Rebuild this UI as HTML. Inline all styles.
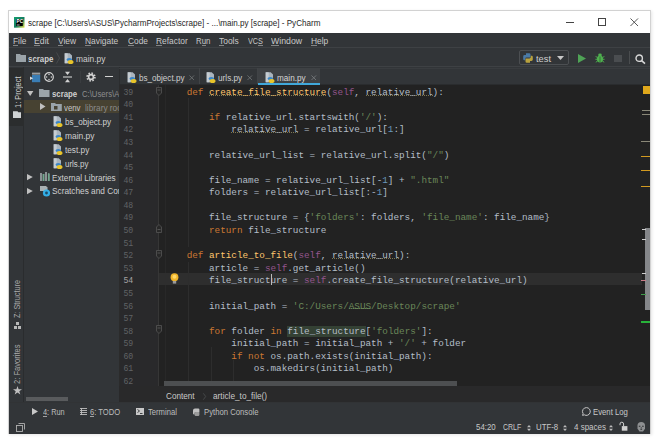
<!DOCTYPE html>
<html><head><meta charset="utf-8">
<style>
*{margin:0;padding:0;box-sizing:border-box}
html,body{width:660px;height:444px;overflow:hidden;background:#fff}
body{position:relative;font-family:"Liberation Sans",sans-serif}
.a{position:absolute;white-space:nowrap}
.t{position:absolute;white-space:nowrap;line-height:1;transform-origin:0 0}
svg.a{overflow:visible}
.code{white-space:pre;font-family:"Liberation Mono",monospace;font-size:9.32px;line-height:12.58px;color:#b4bec8;left:164.3px;top:86.7px}
.ln{white-space:pre;font-family:"Liberation Mono",monospace;font-size:9.32px;line-height:12.58px;color:#606366;left:113px;width:20.3px;text-align:right;top:86.7px;transform:scaleX(0.88);transform-origin:100% 0}
.k{color:#cc7832}.s{color:#94558d}.st{color:#6a8759}.n{color:#6897bb}.f{color:#ffc66d}
.w{background-image:linear-gradient(90deg,rgba(175,165,110,.65) 50%,transparent 50%);background-size:2px 1px;background-repeat:repeat-x;background-position:0 calc(100% - 2px)}
.wg{background-image:linear-gradient(90deg,rgba(110,150,95,.8) 60%,rgba(110,150,95,.4) 60%);background-size:2px 1px;background-repeat:repeat-x;background-position:0 calc(100% - 2.2px)}
.ig{position:absolute;width:1px;background:#2d2d2d}
.mu{border-bottom:0.7px solid rgba(200,200,200,.35)}
</style></head><body>
<!-- python icon def -->
<svg width="0" height="0" style="position:absolute">
 <defs>
  <g id="pyi">
   <path d="M0.7 0.3h5l2.3 2.3v7.7H0.7z" fill="#aab4bd"/>
   <path d="M0.7 0.3h3v10h-3z" fill="#c5ccd2"/>
   <ellipse cx="5.3" cy="6.6" rx="2.8" ry="1.5" fill="#3a86c8"/>
   <ellipse cx="6.6" cy="9" rx="2.9" ry="2" fill="#e8c42a"/>
  </g>
 </defs>
</svg>
<!-- window frame -->
<div class="a" style="left:8px;top:10px;width:643px;height:424px;background:#d2d2d2;box-shadow:1px 1px 3px rgba(0,0,0,.10)"></div>
<div class="a" style="left:9px;top:11px;width:641px;height:422.5px;background:#323538"></div>

<!-- title bar -->
<div class="a" style="left:9px;top:11px;width:641px;height:22px;background:#fff"></div>
<svg class="a" style="left:13.9px;top:16.5px" width="10.5" height="10.7" viewBox="0 0 10.5 10.7">
 <defs><linearGradient id="pcg" x1="0" y1="0" x2="1" y2="1"><stop offset="0" stop-color="#16a06e"/><stop offset=".55" stop-color="#127a5f"/><stop offset="1" stop-color="#e8e24a"/></linearGradient></defs>
 <rect x="0" y="0" width="10.5" height="10.7" fill="url(#pcg)"/>
 <rect x="2.2" y="2" width="6.6" height="7" fill="#000"/>
 <text x="2.6" y="6.3" font-family="Liberation Sans" font-weight="bold" font-size="4.6" fill="#fff">PC</text>
 <rect x="2.8" y="7.6" width="2.8" height="0.8" fill="#ddd"/>
</svg>
<div class="t" style="left:27.80px;top:19.00px;font-size:8.9px;color:#262626;transform:scaleX(0.9092);">scrape [C:\Users\ASUS\PycharmProjects\scrape] - ...\main.py [scrape] - PyCharm</div>
<div class="a" style="left:566px;top:21.6px;width:8px;height:0.9px;background:#444"></div>
<div class="a" style="left:597.5px;top:18px;width:8px;height:8px;border:0.9px solid #444"></div>
<svg class="a" style="left:629.8px;top:17.8px" width="8.5" height="8.5" viewBox="0 0 9 9"><path d="M0.5 0.5L8.5 8.5M8.5 0.5L0.5 8.5" stroke="#444" stroke-width="0.95"/></svg>

<!-- menu bar -->
<div class="a" style="left:9px;top:33px;width:641px;height:15px;background:#323538"></div>
<div class="t" style="left:12.80px;top:37.00px;font-size:9.3px;color:#c9c9c9;transform:scaleX(0.8944);">File</div>
<div class="t" style="left:34.20px;top:37.00px;font-size:9.3px;color:#c9c9c9;transform:scaleX(0.9361);">Edit</div>
<div class="t" style="left:57.70px;top:37.00px;font-size:9.3px;color:#c9c9c9;transform:scaleX(0.9094);">View</div>
<div class="t" style="left:85.10px;top:37.00px;font-size:9.3px;color:#c9c9c9;transform:scaleX(0.9045);">Navigate</div>
<div class="t" style="left:127.50px;top:37.00px;font-size:9.3px;color:#c9c9c9;transform:scaleX(0.8949);">Code</div>
<div class="t" style="left:156.30px;top:37.00px;font-size:9.3px;color:#c9c9c9;transform:scaleX(0.9020);">Refactor</div>
<div class="t" style="left:196.00px;top:37.00px;font-size:9.3px;color:#c9c9c9;transform:scaleX(0.8443);">Run</div>
<div class="t" style="left:219.00px;top:37.00px;font-size:9.3px;color:#c9c9c9;transform:scaleX(0.9076);">Tools</div>
<div class="t" style="left:247.90px;top:37.00px;font-size:9.3px;color:#c9c9c9;transform:scaleX(0.7793);">VCS</div>
<div class="t" style="left:270.90px;top:37.00px;font-size:9.3px;color:#c9c9c9;transform:scaleX(0.9396);">Window</div>
<div class="t" style="left:311.20px;top:37.00px;font-size:9.3px;color:#c9c9c9;transform:scaleX(0.9043);">Help</div>
<div class="a" style="left:12.80px;top:44.80px;width:5.08px;height:0.8px;background:rgba(200,200,200,.55)"></div>
<div class="a" style="left:34.20px;top:44.80px;width:5.81px;height:0.8px;background:rgba(200,200,200,.55)"></div>
<div class="a" style="left:57.70px;top:44.80px;width:5.64px;height:0.8px;background:rgba(200,200,200,.55)"></div>
<div class="a" style="left:85.10px;top:44.80px;width:6.07px;height:0.8px;background:rgba(200,200,200,.55)"></div>
<div class="a" style="left:127.50px;top:44.80px;width:6.01px;height:0.8px;background:rgba(200,200,200,.55)"></div>
<div class="a" style="left:156.30px;top:44.80px;width:6.06px;height:0.8px;background:rgba(200,200,200,.55)"></div>
<div class="a" style="left:201.67px;top:44.80px;width:4.37px;height:0.8px;background:rgba(200,200,200,.55)"></div>
<div class="a" style="left:219.00px;top:44.80px;width:5.16px;height:0.8px;background:rgba(200,200,200,.55)"></div>
<div class="a" style="left:257.97px;top:44.80px;width:4.83px;height:0.8px;background:rgba(200,200,200,.55)"></div>
<div class="a" style="left:270.90px;top:44.80px;width:8.25px;height:0.8px;background:rgba(200,200,200,.55)"></div>
<div class="a" style="left:311.20px;top:44.80px;width:6.07px;height:0.8px;background:rgba(200,200,200,.55)"></div>

<!-- nav bar -->
<div class="a" style="left:9px;top:48px;width:641px;height:18px;background:#323538"></div><div class="a" style="left:9px;top:47px;width:641px;height:1px;background:#3e4144"></div>
<svg class="a" style="left:15.5px;top:54px" width="10" height="8" viewBox="0 0 10 8"><path d="M0 0h4l1 1h5v7H0z" fill="#9aa3a9"/></svg>
<div class="t" style="left:28.20px;top:55.00px;font-size:9px;color:#d0d0d0;font-weight:bold;transform:scaleX(0.8751);">scrape</div>
<svg class="a" style="left:56px;top:51.5px" width="4" height="12" viewBox="0 0 4 12"><path d="M0.5 0.5L3.5 6L0.5 11.5" stroke="#4b4e50" stroke-width="0.8" fill="none"/></svg>
<svg class="a" style="left:63.5px;top:52.5px" width="11" height="11" viewBox="0 0 11 11"><use href="#pyi"/></svg>
<div class="t" style="left:75.80px;top:55.00px;font-size:9.2px;color:#d0d0d0;transform:scaleX(0.9128);">main.py</div>

<!-- run config -->
<div class="a" style="left:518.5px;top:50px;width:50px;height:14.5px;border:1px solid #4c4f52;border-radius:2px;background:#323538"></div>
<svg class="a" style="left:522.5px;top:52.5px" width="10" height="10" viewBox="0 0 10 10"><path d="M3 0.3h3.2a1.3 1.3 0 0 1 1.3 1.3V4.6H3.6A1.4 1.4 0 0 0 2.2 6V7.3H1.4A1.2 1.2 0 0 1 0.2 6.1V3.4A1.4 1.4 0 0 1 1.6 2H3z" fill="#4a7aa6"/><path d="M7 9.7H3.8a1.3 1.3 0 0 1-1.3-1.3V5.4H6.4A1.4 1.4 0 0 0 7.8 4V2.7h.8a1.2 1.2 0 0 1 1.2 1.2v2.7A1.4 1.4 0 0 1 8.4 8H7z" fill="#b9a23e"/></svg>
<div class="t" style="left:536.00px;top:55.00px;font-size:9.3px;color:#cfcfcf;transform:scaleX(1.0006);">test</div>
<svg class="a" style="left:556.5px;top:55.5px" width="7" height="4" viewBox="0 0 7 4"><path d="M0 0h7L3.5 4z" fill="#c8c8c8"/></svg>
<svg class="a" style="left:578px;top:54px" width="8" height="9" viewBox="0 0 8 9"><path d="M0 0L8 4.5L0 9z" fill="#4fa356"/></svg>
<svg class="a" style="left:595px;top:53px" width="10" height="10" viewBox="0 0 10 10"><ellipse cx="5" cy="6" rx="3.1" ry="3.6" fill="#4fb14f"/><ellipse cx="5" cy="2" rx="1.8" ry="1.4" fill="#4fb14f"/><path d="M0.6 3.5L2.2 4.3M9.4 3.5L7.8 4.3M0.4 6.3h1.8M9.6 6.3H7.8M0.8 9.2L2.4 8.2M9.2 9.2L7.6 8.2" stroke="#4fb14f" stroke-width="0.9"/><path d="M5 3.6v5.6" stroke="#2c5a2e" stroke-width="0.7"/></svg>
<div class="a" style="left:614.3px;top:55.3px;width:7.5px;height:7px;background:#4a4d50"></div>
<div class="a" style="left:629px;top:51px;width:1px;height:13px;background:#4a4d4f"></div>
<svg class="a" style="left:635px;top:53.5px" width="11" height="10" viewBox="0 0 11 10"><circle cx="4.2" cy="4.2" r="3.2" stroke="#d8d8d8" stroke-width="1.4" fill="none"/><path d="M6.6 6.6L10 9.6" stroke="#d8d8d8" stroke-width="1.6"/></svg>

<!-- left strip -->
<div class="a" style="left:9px;top:66px;width:15px;height:336px;background:#323538;border-right:1px solid #2a2c2e"></div>
<div class="a" style="left:9px;top:67.5px;width:14.5px;height:58.5px;background:#2b2d2e"></div>
<div class="a" style="left:20.5px;top:108px;transform-origin:0 0;transform:rotate(-90deg)"><div class="t" style="left:0.00px;top:-7.00px;font-size:8.8px;color:#cdcdcd;transform:scaleX(0.8474);">1: Project</div></div>
<svg class="a" style="left:12.8px;top:110.5px" width="8" height="7" viewBox="0 0 8 7"><path d="M0 0.2h4.5l0.8 1h2.7v5.8H0z" fill="#cfd2d4"/></svg>
<div class="a" style="left:20px;top:317.5px;transform-origin:0 0;transform:rotate(-90deg)"><div class="t" style="left:0.00px;top:-7.00px;font-size:8.5px;color:#aaaaaa;transform:scaleX(0.8558);">Z: Structure</div></div>
<svg class="a" style="left:13.5px;top:322px" width="7" height="7" viewBox="0 0 7 7"><rect x="2" y="0" width="3" height="3" fill="#b8b8b8"/><rect x="0" y="4" width="3" height="3" fill="#b8b8b8"/><rect x="4" y="4" width="3" height="3" fill="#b8b8b8"/></svg>
<div class="a" style="left:20px;top:383.5px;transform-origin:0 0;transform:rotate(-90deg)"><div class="t" style="left:0.00px;top:-7.00px;font-size:8.5px;color:#aaaaaa;transform:scaleX(0.8896);">2: Favorites</div></div>
<svg class="a" style="left:12.5px;top:386px" width="9" height="9" viewBox="0 0 10 10"><path d="M5 0l1.2 3.6H10L7 5.9 8.1 9.5 5 7.3 1.9 9.5 3 5.9 0 3.6h3.8z" fill="#c0c0c0"/></svg>

<!-- project panel -->
<div class="a" style="left:24px;top:66px;width:95px;height:336px;background:#323538;border-top:1px solid #313335"></div>
<svg class="a" style="left:30px;top:72px" width="11" height="11" viewBox="0 0 11 11"><rect x="2" y="0.6" width="8.2" height="2" fill="#9a9ea1"/><rect x="2" y="3" width="8.2" height="7.2" fill="#3a7db5"/><path d="M0 4.5L3.2 6.3L0 8.1z" fill="#d6dadc"/></svg>
<svg class="a" style="left:44.4px;top:71.8px" width="10" height="10" viewBox="0 0 10 10"><circle cx="5" cy="5" r="4.3" stroke="#d2d2d2" stroke-width="1.2" fill="none"/><circle cx="5" cy="2.6" r="0.75" fill="#d2d2d2"/><circle cx="5" cy="7.4" r="0.75" fill="#d2d2d2"/><circle cx="2.6" cy="5" r="0.75" fill="#d2d2d2"/><circle cx="7.4" cy="5" r="0.75" fill="#d2d2d2"/></svg>
<svg class="a" style="left:63px;top:70.5px" width="9" height="12" viewBox="0 0 9 12"><path d="M0 6h9" stroke="#d2d2d2" stroke-width="1.1"/><path d="M2 0.8h5L4.5 4z M2 11.2h5L4.5 8z" fill="#d2d2d2"/></svg>
<div class="a" style="left:80px;top:71px;width:1px;height:12px;background:#3a3d40"></div>
<svg class="a" style="left:85.8px;top:72px" width="10" height="10" viewBox="0 0 10 10"><circle cx="5" cy="5" r="3.9" stroke="#d2d2d2" stroke-width="1.6" stroke-dasharray="1.55 1.51" fill="none"/><circle cx="5" cy="5" r="2.4" stroke="#d2d2d2" stroke-width="1.6" fill="none"/></svg>
<div class="a" style="left:104.7px;top:75.5px;width:8.8px;height:1.4px;background:#d2d2d2"></div>

<!-- tree -->
<svg class="a" style="left:27px;top:91.2px" width="6.4" height="5" viewBox="0 0 6.4 5"><path d="M0 0h6.4L3.2 5z" fill="#c0c0c0"/></svg>
<svg class="a" style="left:39.2px;top:89px" width="10.5" height="8" viewBox="0 0 10.5 8"><path d="M0 0h4l1 1h5.5v7H0z" fill="#9aa3a9"/></svg>
<div class="t" style="left:52.00px;top:90.00px;font-size:9px;color:#d0d0d0;font-weight:bold;transform:scaleX(0.8682);">scrape</div>
<div class="a" style="left:80.60px;top:88.00px;width:38.40px;height:13.3px;overflow:hidden"><div class="t" style="left:1.00px;top:2px;font-size:9.3px;color:#8e8e8e;transform:scaleX(0.8300);">C:\Users\ASUS\PycharmProjects\scrape</div></div>
<div class="a" style="left:24px;top:100px;width:95px;height:13px;background:#474232"></div>
<svg class="a" style="left:40px;top:103px" width="5.5" height="7" viewBox="0 0 5.5 7"><path d="M0 0L5.5 3.5L0 7z" fill="#c0c0c0"/></svg>
<svg class="a" style="left:51.3px;top:103px" width="10.8" height="8" viewBox="0 0 10.8 8"><path d="M0 0h4l1 1h5.8v7H0z" fill="#9aa3a9"/><rect x="3" y="3" width="3.5" height="3.5" fill="#474232"/></svg>
<div class="t" style="left:64.30px;top:104.00px;font-size:9.2px;color:#c8c8c8;transform:scaleX(0.8492);">venv</div>
<div class="a" style="left:84.20px;top:102.00px;width:34.80px;height:13.2px;overflow:hidden"><div class="t" style="left:1.00px;top:2px;font-size:9.2px;color:#8a8a8a;transform:scaleX(0.9000);">library root</div></div>
<svg class="a" style="left:52.5px;top:116px" width="11" height="11" viewBox="0 0 11 11"><use href="#pyi"/></svg>
<div class="t" style="left:64.50px;top:118.00px;font-size:9.2px;color:#d0d0d0;transform:scaleX(0.8924);">bs_object.py</div>
<svg class="a" style="left:52.5px;top:130px" width="11" height="11" viewBox="0 0 11 11"><use href="#pyi"/></svg>
<div class="t" style="left:64.50px;top:132.00px;font-size:9.2px;color:#d0d0d0;transform:scaleX(0.9159);">main.py</div>
<svg class="a" style="left:52.5px;top:143.8px" width="11" height="11" viewBox="0 0 11 11"><use href="#pyi"/></svg>
<div class="t" style="left:64.50px;top:146.00px;font-size:9.2px;color:#d0d0d0;transform:scaleX(0.8966);">test.py</div>
<svg class="a" style="left:52.5px;top:157.6px" width="11" height="11" viewBox="0 0 11 11"><use href="#pyi"/></svg>
<div class="t" style="left:64.50px;top:160.00px;font-size:9.2px;color:#d0d0d0;transform:scaleX(0.8637);">urls.py</div>
<svg class="a" style="left:27.3px;top:174.4px" width="5.8" height="6.2" viewBox="0 0 5 6" preserveAspectRatio="none"><path d="M0 0L5 3L0 6z" fill="#c0c0c0"/></svg>
<svg class="a" style="left:39.5px;top:172px" width="10" height="9" viewBox="0 0 10 9"><path d="M1 1v8M3.5 2v7M6 0v9M8.7 1.5v7.5" stroke="#a9b1b3" stroke-width="1.5"/><path d="M3.5 2v7M8.7 1.5v7.5" stroke="#6fa88c" stroke-width="1.5"/></svg>
<div class="t" style="left:52.00px;top:174.00px;font-size:9.2px;color:#d0d0d0;transform:scaleX(0.8912);">External Libraries</div>
<svg class="a" style="left:27.3px;top:188.2px" width="5.8" height="6.2" viewBox="0 0 5 6" preserveAspectRatio="none"><path d="M0 0L5 3L0 6z" fill="#c0c0c0"/></svg>
<svg class="a" style="left:40px;top:185.5px" width="11" height="11" viewBox="0 0 11 11"><path d="M0 0h6l1.5 1.5V5H0z" fill="#a9b1b3"/><circle cx="6.5" cy="7" r="3.6" fill="#33aee6"/><circle cx="6.5" cy="7" r="1.4" fill="#1d4a66"/></svg>
<div class="a" style="left:51.00px;top:185.00px;width:68.00px;height:13.2px;overflow:hidden"><div class="t" style="left:1.00px;top:2px;font-size:9.2px;color:#d0d0d0;transform:scaleX(0.9000);">Scratches and Consoles</div></div>
<div class="a" style="left:25.5px;top:396.5px;width:42px;height:4.5px;background:#595b5d"></div>

<!-- editor tabs -->
<div class="a" style="left:119px;top:66px;width:531px;height:19px;background:#323538;border-left:1px solid #2b2d2f"></div>
<div class="a" style="left:9px;top:65.6px;width:641px;height:1px;background:#3e4144"></div>
<div class="a" style="left:119px;top:68px;width:531px;height:1px;background:#393c3f"></div>
<div class="a" style="left:119px;top:84px;width:531px;height:1px;background:#2a2c2e"></div>
<svg class="a" style="left:126.5px;top:71.8px" width="11" height="11" viewBox="0 0 11 11"><use href="#pyi"/></svg>
<div class="t" style="left:138.50px;top:74.00px;font-size:9.1px;color:#cfcfcf;transform:scaleX(0.8905);">bs_object.py</div>
<svg class="a" style="left:188.5px;top:74.5px" width="5.5" height="5.5" viewBox="0 0 6 6"><path d="M0.5 0.5L5.5 5.5M5.5 0.5L0.5 5.5" stroke="#707375" stroke-width="0.9"/></svg>
<div class="a" style="left:199px;top:68px;width:1px;height:16px;background:#404346"></div>
<svg class="a" style="left:206px;top:71.8px" width="11" height="11" viewBox="0 0 11 11"><use href="#pyi"/></svg>
<div class="t" style="left:217.90px;top:74.00px;font-size:9.1px;color:#cfcfcf;transform:scaleX(0.9030);">urls.py</div>
<svg class="a" style="left:247px;top:74.5px" width="5.5" height="5.5" viewBox="0 0 6 6"><path d="M0.5 0.5L5.5 5.5M5.5 0.5L0.5 5.5" stroke="#707375" stroke-width="0.9"/></svg>
<div class="a" style="left:256.5px;top:68px;width:1px;height:16px;background:#404346"></div>
<div class="a" style="left:257.5px;top:68px;width:62.8px;height:17px;background:#3e4144"></div>
<div class="a" style="left:257.5px;top:82.6px;width:62.8px;height:2.6px;background:#40a8da"></div>
<svg class="a" style="left:264.5px;top:71.5px" width="11" height="11" viewBox="0 0 11 11"><use href="#pyi"/></svg>
<div class="t" style="left:276.70px;top:74.00px;font-size:9.1px;color:#d6d6d6;transform:scaleX(0.8977);">main.py</div>
<svg class="a" style="left:310.5px;top:74.5px" width="5.5" height="5.5" viewBox="0 0 6 6"><path d="M0.5 0.5L5.5 5.5M5.5 0.5L0.5 5.5" stroke="#7a7d80" stroke-width="0.9"/></svg>

<!-- gutter + editor -->
<div class="a" style="left:119px;top:85px;width:39.5px;height:301px;background:#29292b;border-left:1px solid #2b2b2b"></div>
<div class="a" style="left:158.5px;top:85px;width:491.5px;height:301px;background:#222222"></div>
<div class="a" style="left:158.2px;top:85px;width:1px;height:301px;background:#363636"></div>
<div class="a" style="left:164.5px;top:85px;width:1px;height:301px;background:#282828"></div>
<div class="a" style="left:159px;top:272.8px;width:483px;height:12px;background:#2e2e2e"></div>
<div class="ig" style="left:188.3px;top:98px;height:149px"></div>
<div class="ig" style="left:188.3px;top:262px;height:124px"></div>
<div class="ig" style="left:210.6px;top:347px;height:39px"></div>
<div class="ig" style="left:233px;top:360px;height:26px"></div>
<svg class="a" style="left:155.5px;top:86.5px" width="6" height="9" viewBox="0 0 6 9"><path d="M0.5 0.5h5v5.5L3 8.5 0.5 6z" stroke="#555" stroke-width="0.8" fill="#282828"/><path d="M1.5 3h3" stroke="#666" stroke-width=".7"/></svg>
<svg class="a" style="left:155.5px;top:223.5px" width="6" height="9" viewBox="0 0 6 9"><path d="M0.5 8.5h5V3L3 0.5 0.5 3z" stroke="#555" stroke-width="0.8" fill="#282828"/><path d="M1.5 5.5h3" stroke="#666" stroke-width=".7"/></svg>
<svg class="a" style="left:155.5px;top:249.8px" width="6" height="9" viewBox="0 0 6 9"><path d="M0.5 0.5h5v5.5L3 8.5 0.5 6z" stroke="#555" stroke-width="0.8" fill="#282828"/><path d="M1.5 3h3" stroke="#666" stroke-width=".7"/></svg>
<svg class="a" style="left:155.5px;top:325px" width="6" height="9" viewBox="0 0 6 9"><path d="M0.5 0.5h5v5.5L3 8.5 0.5 6z" stroke="#555" stroke-width="0.8" fill="#282828"/><path d="M1.5 3h3" stroke="#666" stroke-width=".7"/></svg>
<svg class="a" style="left:169.5px;top:272.5px" width="9" height="11" viewBox="0 0 9 11"><circle cx="4.5" cy="4.2" r="3.9" fill="#f0b429"/><circle cx="4.5" cy="3.8" r="2" fill="#ffd867"/><rect x="2.8" y="8" width="3.4" height="2.6" fill="#9a9a9a"/></svg>
<div class="a" style="left:270.5px;top:274px;width:1px;height:11px;background:#bbbbbb"></div>

<pre class="a ln">39
40
41
42
43
44
45
46
47
48
49
50
51
52
53
<span style="color:#a4a3a3">54</span>
55
56
57
58
59
60
61
62</pre>
<pre class="a code">    <span class="k">def</span> <span class="f w">create_file_structure</span>(<span class="s">self</span>, <span class="w">relative_url</span>):

        <span class="k">if</span> relative_url.startswith(<span class="st">'/'</span>):
            <span class="w">relative_url</span> = relative_url[<span class="n">1</span>:]

        relative_url_list = relative_url.split(<span class="st">"/"</span>)

        file_name = relative_url_list[-<span class="n">1</span>] + <span class="st">".html"</span>
        folders = relative_url_list[:-<span class="n">1</span>]

        file_structure = {<span class="st">'folders'</span>: folders, <span class="st">'file_name'</span>: file_name}
        <span class="k">return</span> file_structure

    <span class="k">def</span> <span class="f">article_to_file</span>(<span class="s">self</span>, <span class="w">relative_url</span>):
        article = <span class="s">self</span>.get_article()
        file_structure = <span class="s">self</span>.create_file_structure(relative_url)

        initial_path = <span class="st">'C:/Users/<span class="wg">ASUS</span>/Desktop/scrape'</span>

        <span class="k">for</span> folder <span class="k">in</span> <span style="background:#344134">file_structure</span>[<span class="st">'folders'</span>]:
            initial_path = initial_path + <span class="st">'/'</span> + folder
            <span class="k">if not</span> os.path.exists(initial_path):
                os.makedirs(initial_path)
</pre>

<div class="a" style="left:643px;top:86px;width:7px;height:7.5px;background:#e0a81c"></div>
<div class="a" style="left:642px;top:109.5px;width:8px;height:1px;background:#8a8878"></div>
<div class="a" style="left:641px;top:141px;width:9px;height:1.2px;background:#8a8878"></div>
<div class="a" style="left:641px;top:155.5px;width:9px;height:1.4px;background:#d29a20"></div>
<div class="a" style="left:641px;top:169.6px;width:9px;height:1.4px;background:#d29a20"></div>
<div class="a" style="left:641px;top:185.8px;width:9px;height:1.4px;background:#d29a20"></div>
<div class="a" style="left:642px;top:113.5px;width:8px;height:1px;background:#8a8878"></div>
<div class="a" style="left:645px;top:228px;width:5px;height:82px;background:#85878a"></div>
<div class="a" style="left:642px;top:228.5px;width:4px;height:1px;background:#cfcfcf"></div>
<div class="a" style="left:642px;top:239px;width:4px;height:1px;background:#cfcfcf"></div>
<div class="a" style="left:642px;top:273px;width:4px;height:1px;background:#cfcfcf"></div>
<div class="a" style="left:641px;top:280px;width:5px;height:1.2px;background:#c87c88"></div>
<div class="a" style="left:641px;top:294px;width:5px;height:1.2px;background:#3f9b4a"></div>
<div class="a" style="left:640.5px;top:321px;width:9.5px;height:1.5px;background:#28b33a"></div>
<div class="a" style="left:164px;top:380.5px;width:293px;height:5px;background:#4d4f51"></div>

<!-- breadcrumbs -->
<div class="a" style="left:119px;top:386px;width:531px;height:16px;background:#29292a"></div>
<div class="t" style="left:165.90px;top:392.00px;font-size:9px;color:#c8c8c8;transform:scaleX(0.9074);">Content</div>
<svg class="a" style="left:203px;top:392.5px" width="3" height="7" viewBox="0 0 3 7"><path d="M0.3 0.3L2.7 3.5L0.3 6.7" stroke="#4d4f51" stroke-width="0.8" fill="none"/></svg>
<div class="t" style="left:212.60px;top:392.00px;font-size:9px;color:#c8c8c8;transform:scaleX(0.9166);">article_to_file()</div>

<!-- bottom bar -->
<div class="a" style="left:9px;top:402px;width:641px;height:17px;background:#323538;border-top:1px solid #313335"></div>
<svg class="a" style="left:32.2px;top:408px" width="6" height="7" viewBox="0 0 6 7"><path d="M0 0L6 3.5L0 7z" fill="#c8c8c8"/></svg>
<div class="t" style="left:42.60px;top:408.00px;font-size:8.6px;color:#bdbdbd;transform:scaleX(0.8565);">4: Run</div><div class="a" style="left:42.60px;top:415.80px;width:4.10px;height:0.8px;background:rgba(190,190,190,.8)"></div>
<svg class="a" style="left:80px;top:407.5px" width="7" height="7" viewBox="0 0 7 7"><path d="M0 0.5h7M0 2.5h7M0 4.5h7M0 6.5h7M1.5 0v7" stroke="#c0c0c0" stroke-width="0.9"/></svg>
<div class="t" style="left:89.90px;top:408.00px;font-size:8.6px;color:#bdbdbd;transform:scaleX(0.8829);">6: TODO</div><div class="a" style="left:89.90px;top:415.80px;width:4.22px;height:0.8px;background:rgba(190,190,190,.8)"></div>
<svg class="a" style="left:135.7px;top:408px" width="8" height="7" viewBox="0 0 8 7"><rect x="0" y="0" width="8" height="7" fill="#c8c8c8"/><path d="M1.5 1.5L3.5 3L1.5 4.5M4 5.5h2.5" stroke="#323538" stroke-width=".9" fill="none"/></svg>
<div class="t" style="left:147.70px;top:408.00px;font-size:8.6px;color:#bdbdbd;transform:scaleX(0.8892);">Terminal</div>
<svg class="a" style="left:192.5px;top:407.5px" width="8" height="8" viewBox="0 0 10 10"><path d="M2.5 0.5h4a1.5 1.5 0 0 1 1.5 1.5v3H3.5a1.5 1.5 0 0 0-1.5 1.5V8H1a1 1 0 0 1-1-1V3a2.5 2.5 0 0 1 2.5-2.5z" fill="#c0c0c0"/><path d="M8 5v3.5A1.5 1.5 0 0 1 6.5 10H3.5A1.5 1.5 0 0 1 2 8.5V6.5A1.5 1.5 0 0 1 3.5 5z" fill="#9a9a9a"/></svg>
<div class="t" style="left:203.90px;top:408.00px;font-size:8.6px;color:#bdbdbd;transform:scaleX(0.8976);">Python Console</div>
<svg class="a" style="left:581.8px;top:407px" width="9" height="9" viewBox="0 0 9 9"><path d="M4.5 0.6a3.9 3.9 0 1 1-2.2 7.2L0.6 8.4 1.1 6.6A3.9 3.9 0 0 1 4.5 0.6z" stroke="#c8c8c8" stroke-width="1" fill="none"/></svg>
<div class="t" style="left:593.30px;top:408.00px;font-size:8.6px;color:#c8c8c8;transform:scaleX(0.9012);">Event Log</div>

<!-- status bar -->
<div class="a" style="left:9px;top:419px;width:641px;height:14.5px;background:#323538"></div>
<svg class="a" style="left:16px;top:422.5px" width="9" height="9" viewBox="0 0 9 9"><rect x="0.5" y="2.5" width="6" height="6" stroke="#b0b0b0" stroke-width="0.9" fill="none"/><path d="M2.5 0.5h6v6" stroke="#b0b0b0" stroke-width="0.9" fill="none"/></svg>
<div class="t" style="left:475.80px;top:423.00px;font-size:8.8px;color:#c8c8c8;transform:scaleX(0.8947);">54:20</div>
<div class="t" style="left:503.30px;top:423.00px;font-size:8.8px;color:#c8c8c8;transform:scaleX(0.7921);">CRLF</div>
<div class="t" style="left:536.40px;top:423.00px;font-size:8.8px;color:#c8c8c8;transform:scaleX(0.8865);">UTF-8</div>
<div class="t" style="left:573.60px;top:423.00px;font-size:8.8px;color:#c8c8c8;transform:scaleX(0.9058);">4 spaces</div>
<svg class="a" style="left:526.5px;top:424.5px" width="4" height="6" viewBox="0 0 4 6"><path d="M0 2.3L2 0L4 2.3zM0 3.7L2 6L4 3.7z" fill="#bbbbbb"/></svg>
<svg class="a" style="left:562.5px;top:424.5px" width="4" height="6" viewBox="0 0 4 6"><path d="M0 2.3L2 0L4 2.3zM0 3.7L2 6L4 3.7z" fill="#bbbbbb"/></svg>
<svg class="a" style="left:608.5px;top:424.5px" width="4" height="6" viewBox="0 0 4 6"><path d="M0 2.3L2 0L4 2.3zM0 3.7L2 6L4 3.7z" fill="#bbbbbb"/></svg>
<svg class="a" style="left:618.8px;top:421.8px" width="9" height="9" viewBox="0 0 9 9"><path d="M1 3.2V2a1.8 1.8 0 0 1 3.6 0v2.2" stroke="#d0d0d0" stroke-width="1" fill="none"/><rect x="2.8" y="4.1" width="5.6" height="4.6" fill="#d0d0d0"/></svg>
<svg class="a" style="left:637px;top:421.7px" width="8.5" height="10" viewBox="0 0 8.5 10"><path d="M0.5 3.5a3.75 3.5 0 0 1 7.5 0v3.2L6 9.6H2.5L0.5 6.7z" fill="#8e9092"/><path d="M1.8 4.2h1.6M5.1 4.2h1.6M3.4 7.3h1.7" stroke="#2a2c2e" stroke-width="1.1"/><path d="M4.25 5v1.5" stroke="#2a2c2e" stroke-width=".6"/></svg>
</body></html>
